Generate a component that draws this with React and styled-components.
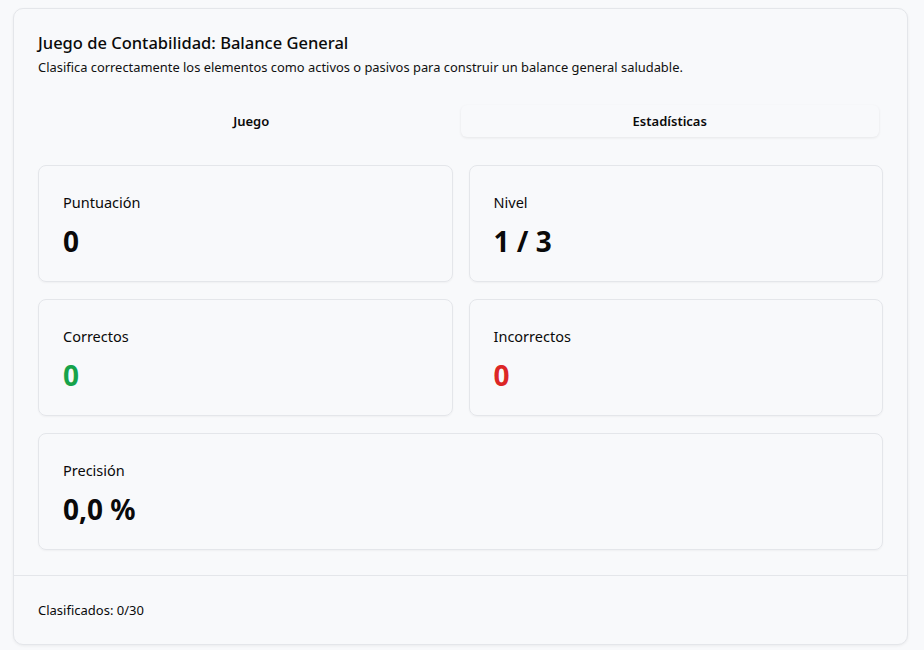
import React, { useState } from "react";
import styled, { createGlobalStyle } from "styled-components";

const GlobalStyle = createGlobalStyle`
  * { box-sizing: border-box; }
  body {
    margin: 0;
    background-color: #f8f9fb;
    font-family: "Noto Sans", "Open Sans", sans-serif;
    color: #0a0a0a;
  }
`;

const stats = [
  { label: "Puntuación", value: "0" },
  { label: "Nivel", value: "1 / 3" },
  { label: "Correctos", value: "0", tone: "good" },
  { label: "Incorrectos", value: "0", tone: "bad" },
  { label: "Precisión", value: "0,0 %", wide: true },
];

const App = () => {
  const [tab, setTab] = useState("stats");

  return (
    <>
      <GlobalStyle />
      <StPage>
        <StCard>
          <StHeader>
            <h1 className='title'>Juego de Contabilidad: Balance General</h1>
            <p className='desc'>
              Clasifica correctamente los elementos como activos o pasivos para
              construir un balance general saludable.
            </p>
          </StHeader>
          <StContent>
            <StTabList>
              <StTab active={tab === "game"} onClick={() => setTab("game")}>
                Juego
              </StTab>
              <StTab active={tab === "stats"} onClick={() => setTab("stats")}>
                Estadísticas
              </StTab>
            </StTabList>
            <StGrid>
              {stats.map((s) => (
                <StStat key={s.label} wide={s.wide}>
                  <div className='label'>{s.label}</div>
                  <StValue tone={s.tone}>{s.value}</StValue>
                </StStat>
              ))}
            </StGrid>
          </StContent>
          <StFooter>Clasificados: 0/30</StFooter>
        </StCard>
      </StPage>
    </>
  );
};

const StPage = styled.div`
  padding: 8px 16px 6px 13px;
`;

const StCard = styled.div`
  background-color: #f8f9fb;
  border: 1px solid #e4e6ea;
  border-radius: 10px;
  box-shadow: 0 1px 3px rgba(0, 0, 0, 0.06);
`;

const StHeader = styled.div`
  padding: 25px 24px 0 24px;

  .title {
    margin: 0;
    font-size: 16.5px;
    font-weight: 500;
    line-height: 18px;
  }
  .desc {
    margin: 6px 0 0 0;
    font-size: 12.9px;
    line-height: 18px;
    color: #111;
  }
`;

const StContent = styled.div`
  padding: 25px 24px 25px 24px;
`;

const StTabList = styled.div`
  display: grid;
  grid-template-columns: 1fr 1fr;
  padding: 4px;
  height: 40px;
  border-radius: 8px;
`;

const StTab = styled.button`
  border: none;
  border-radius: 6px;
  font-family: inherit;
  font-size: 13px;
  font-weight: 600;
  color: #0a0a0a;
  cursor: pointer;
  background-color: ${(p) => (p.active ? "#f8f9fb" : "transparent")};
  box-shadow: ${(p) => (p.active ? "0 1px 3px rgba(0,0,0,0.08)" : "none")};
`;

const StGrid = styled.div`
  display: grid;
  grid-template-columns: 1fr 1fr;
  gap: 17px 16px;
  margin-top: 24px;
`;

const StStat = styled.div`
  grid-column: ${(p) => (p.wide ? "1 / -1" : "auto")};
  height: 117px;
  padding: 24px;
  border: 1px solid #e4e6ea;
  border-radius: 8px;
  box-shadow: 0 1px 2px rgba(0, 0, 0, 0.04);

  .label {
    font-size: 14.5px;
    line-height: 24px;
  }
`;

const StValue = styled.div`
  margin-top: 9px;
  font-size: 28px;
  font-weight: 700;
  line-height: 36px;
  color: ${(p) =>
    p.tone === "good" ? "#16a34a" : p.tone === "bad" ? "#dc2626" : "#0a0a0a"};
`;

const StFooter = styled.div`
  border-top: 1px solid #e4e6ea;
  padding: 24px;
  font-size: 13px;
  line-height: 20px;
`;

export default App;
